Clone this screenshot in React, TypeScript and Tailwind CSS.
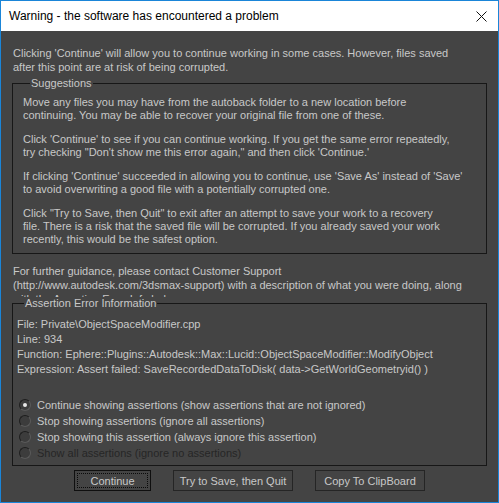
import React from "react";

const suggestions: string[][] = [
    [
        "Move any files you may have from the autoback folder to a new location before",
        "continuing. You may be able to recover your original file from one of these.",
    ],
    [
        "Click 'Continue' to see if you can continue working. If you get the same error repeatedly,",
        "try checking \"Don't show me this error again,\" and then click 'Continue.'",
    ],
    [
        "If clicking 'Continue' succeeded in allowing you to continue, use 'Save As' instead of 'Save'",
        "to avoid overwriting a good file with a potentially corrupted one.",
    ],
    [
        "Click \"Try to Save, then Quit\" to exit after an attempt to save your work to a recovery",
        "file. There is a risk that the saved file will be corrupted. If you already saved your work",
        "recently, this would be the safest option.",
    ],
];

const options = [
    { label: "Continue showing assertions (show assertions that are not ignored)", checked: true, disabled: false },
    { label: "Stop showing assertions (ignore all assertions)", checked: false, disabled: false },
    { label: "Stop showing this assertion (always ignore this assertion)", checked: false, disabled: false },
    { label: "Show all assertions (ignore no assertions)", checked: false, disabled: true },
];

function Radio({ checked }: { checked: boolean }) {
    return (
        <span className="relative w-[12px] h-[12px] rounded-full bg-[#3c3c3c] border border-t-[#1e1e1e] border-l-[#1e1e1e] border-b-[#5a5a5a] border-r-[#5a5a5a] flex items-center justify-center shrink-0">
            {checked && <span className="w-[4px] h-[4px] rounded-full bg-[#e8e8e8]" />}
        </span>
    );
}

function Btn({ label, focused, width }: { label: string; focused?: boolean; width: string }) {
    return (
        <button
            className={
                "h-[21px] bg-[#444444] text-[#c8c8c8] border flex items-center justify-center p-[2px] " +
                width +
                (focused ? " border-[#0f0f0f]" : " border-[#252525]")
            }
        >
            <span
                className={
                    "w-full h-full flex items-center justify-center " +
                    (focused ? "border border-dotted border-[#0a0a0a]" : "")
                }
            >
                {label}
            </span>
        </button>
    );
}

export default function App() {
    return (
        <div className="w-[499px] h-[503px] border border-[#1a85d8] bg-[#444444] flex flex-col font-['Liberation_Sans',sans-serif] text-[11px] text-[#c8c8c8]">
            {/* title bar */}
            <div className="h-[30px] bg-white flex items-center justify-between pl-[8px] pr-[10px] shrink-0">
                <span className="font-['Liberation_Sans',sans-serif] text-[12px] text-black">
                    Warning - the software has encountered a problem
                </span>
                <svg width="11" height="11" viewBox="0 0 11 11" className="mr-[1px]">
                    <path d="M0.5 0.5 L10.5 10.5 M10.5 0.5 L0.5 10.5" stroke="#111" strokeWidth="1" />
                </svg>
            </div>

            <div className="flex-1 flex flex-col px-[11px] pt-[15px] pb-[11px] leading-[14px]">
                <p className="pl-[1px] whitespace-nowrap">
                    Clicking 'Continue' will allow you to continue working in some cases. However, files saved
                    <br />
                    after this point are at risk of being corrupted.
                </p>

                <fieldset className="mt-[3px] border border-[#171717] pl-[10px] pr-[8px] pb-[7px] leading-[13px]">
                    <legend className="ml-[7px] px-[1px] leading-[13px]">Suggestions</legend>
                    <div className="flex flex-col gap-[11px] pt-[6px]">
                        {suggestions.map((para, i) => (
                            <p key={i} className="whitespace-nowrap">
                                {para.map((line, j) => (
                                    <span key={j} className="block">{line}</span>
                                ))}
                            </p>
                        ))}
                    </div>
                </fieldset>

                <div className="mt-[10px] h-[33px] overflow-hidden whitespace-nowrap pl-[1px]">
                    For further guidance, please contact Customer Support
                    <br />
                    (http://www.autodesk.com/3dsmax-support) with a description of what you were doing, along
                    <br />
                    with the Assertion Error Info below.
                </div>

                <fieldset className="border border-[#171717] pl-[4px] pr-[8px] pb-[4px] leading-[15px]">
                    <legend className="ml-[7px] px-[1px] leading-[13px]">Assertion Error Information</legend>
                    <div className="pt-[7px] whitespace-nowrap">
                        <div>File: Private\ObjectSpaceModifier.cpp</div>
                        <div>Line: 934</div>
                        <div>Function: Ephere::Plugins::Autodesk::Max::Lucid::ObjectSpaceModifier::ModifyObject</div>
                        <div>Expression: Assert failed: SaveRecordedDataToDisk( data-&gt;GetWorldGeometryid() )</div>
                    </div>
                    <div className="mt-[20px] flex flex-col leading-[16px]">
                        {options.map((o, i) => (
                            <label key={i} className="flex items-center gap-[6px] pl-[2px] whitespace-nowrap">
                                <Radio checked={o.checked} />
                                <span className={o.disabled ? "text-[#262626]" : ""}>{o.label}</span>
                            </label>
                        ))}
                    </div>
                </fieldset>

                <div className="mt-[4px] flex justify-center gap-[22px]">
                    <Btn label="Continue" focused width="w-[77px]" />
                    <Btn label="Try to Save, then Quit" width="w-[120px]" />
                    <Btn label="Copy To ClipBoard" width="w-[110px]" />
                </div>
            </div>
        </div>
    );
}
